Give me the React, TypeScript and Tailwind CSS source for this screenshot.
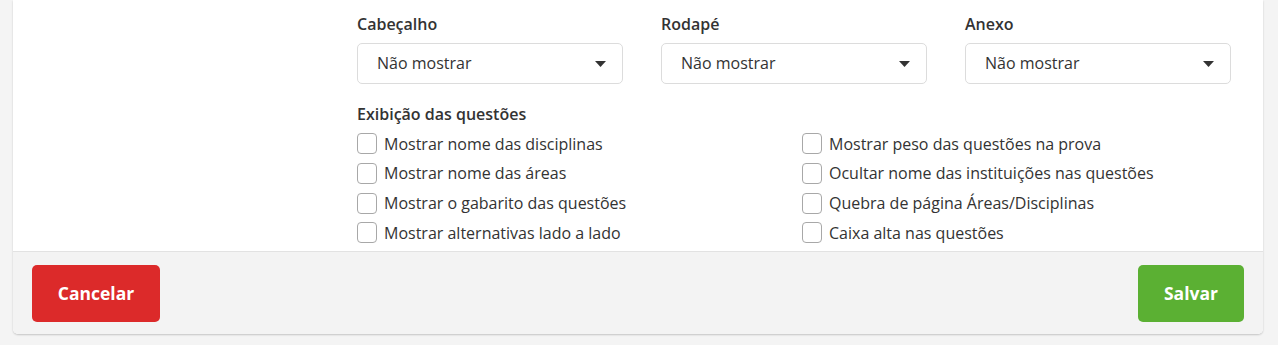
import React from "react";

const Caret = () => (
  <svg width="11" height="6" viewBox="0 0 11 6" className="shrink-0">
    <path d="M0 0 L11 0 L5.5 6 Z" fill="#333" />
  </svg>
);

const Select = ({ label }: { label: string }) => (
  <div className="flex flex-col px-[19px]">
    <div className="text-[16px] font-semibold text-[#333] leading-[20px] mt-[14px]">{label}</div>
    <div className="mt-[9px] h-[41px] rounded-[5px] border border-[#dcdcdc] bg-white flex items-center justify-between pl-[19px] pr-[16px]">
      <span className="text-[16px] text-[#333] leading-[20px] -mt-[1px]">Não mostrar</span>
      <Caret />
    </div>
  </div>
);

const Check = ({ text }: { text: string }) => (
  <label className="flex items-center h-[29.67px] gap-[7px]">
    <span className="w-[20px] h-[21px] rounded-[4px] border border-[#a8a8a8] bg-white shrink-0" />
    <span className="text-[16px] text-[#333] leading-[20px]">{text}</span>
  </label>
);

export default function App() {
  return (
    <div
      className="w-[1278px] h-[345px] bg-[#f4f4f4] pl-[13px] pr-[15px]"
      style={{ fontFamily: '"Open Sans", "Noto Sans", sans-serif' }}
    >
      <div className="bg-white rounded-b-[5px] shadow-[0_1px_2px_rgba(0,0,0,0.2)] overflow-hidden">
        <div className="h-[251px] pl-[325px]">
          <div className="w-[912px] grid grid-cols-3">
            <Select label="Cabeçalho" />
            <Select label="Rodapé" />
            <Select label="Anexo" />
          </div>
          <div className="pl-[19px] mt-[20px]">
            <div className="text-[16px] font-semibold text-[#333] leading-[20px]">Exibição das questões</div>
            <div className="grid grid-cols-[445px_1fr] mt-[5px]">
              <div className="flex flex-col">
                <Check text="Mostrar nome das disciplinas" />
                <Check text="Mostrar nome das áreas" />
                <Check text="Mostrar o gabarito das questões" />
                <Check text="Mostrar alternativas lado a lado" />
              </div>
              <div className="flex flex-col">
                <Check text="Mostrar peso das questões na prova" />
                <Check text="Ocultar nome das instituições nas questões" />
                <Check text="Quebra de página Áreas/Disciplinas" />
                <Check text="Caixa alta nas questões" />
              </div>
            </div>
          </div>
        </div>
        <div className="h-[83px] bg-[#f3f3f3] border-t border-[#e2e2e2] flex items-center justify-between pl-[19px] pr-[19px]">
          <button className="h-[57px] w-[128px] rounded-[5px] bg-[#dc2a2a] text-white font-bold text-[17.5px]">
            Cancelar
          </button>
          <button className="h-[57px] w-[106px] rounded-[5px] bg-[#5bb033] text-white font-bold text-[17.5px]">
            Salvar
          </button>
        </div>
      </div>
    </div>
  );
}
